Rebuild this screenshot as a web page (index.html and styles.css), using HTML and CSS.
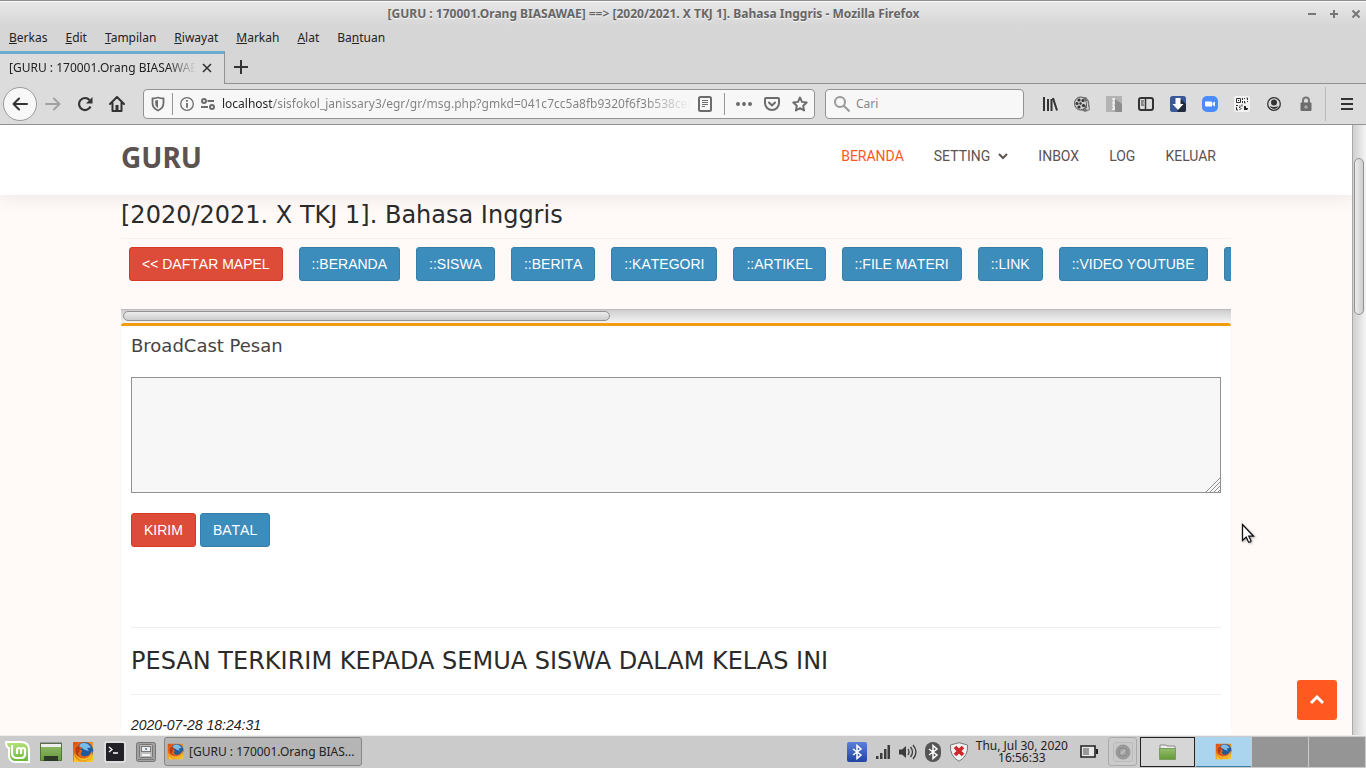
FILE: index.html
```html
<!DOCTYPE html>
<html lang="id">
<head>
<meta charset="utf-8">
<title>[GURU : 170001.Orang BIASAWAE] ==&gt; [2020/2021. X TKJ 1]. Bahasa Inggris</title>
<link rel="stylesheet" href="styles.css">
</head>
<body>
<svg class="defs" aria-hidden="true">
  <defs>
    <linearGradient id="fox" x1="0" y1="0" x2="1" y2="1"><stop offset="0" stop-color="#d94a18"/><stop offset=".5" stop-color="#f08a1c"/><stop offset="1" stop-color="#fbd02c"/></linearGradient>
    <linearGradient id="leaf" x1="0" y1="0" x2="0" y2="1"><stop offset="0" stop-color="#b5e27a"/><stop offset="1" stop-color="#6bb53a"/></linearGradient>
    <linearGradient id="green" x1="0" y1="0" x2="0" y2="1"><stop offset="0" stop-color="#94bd6c"/><stop offset="1" stop-color="#659a3a"/></linearGradient>
    <linearGradient id="blue" x1="0" y1="0" x2="0" y2="1"><stop offset="0" stop-color="#5b80da"/><stop offset="1" stop-color="#2144a4"/></linearGradient>
    <symbol id="firefox" viewBox="0 0 22 22">
      <rect x="1" y="1" width="20" height="20" rx="1" fill="url(#fox)"/>
      <path d="M2 13q1 6 7 8H2z" fill="#fbc52c"/>
      <circle cx="13" cy="9.500" r="8.300" fill="#1f5a9c"/>
      <path d="M8 3.500c4-3 9-1 11 3l-4 .5 2 3-4-1-3-2-3-1z" fill="#79bce8"/>
      <path d="M3 3c0 2 1 3 2 3 2-1 4 0 5 1L8 9c2 0 3 1 1 3-1 2 2 4 5 3 3 0 5-3 5.500-6C21 15 17 20 12 19.500 4 19 1 11 3 3z" fill="#e2661a"/>
      <path d="M20.500 10c0 6-4 9.500-9 9.500-4-.5-7-3-8-7 2 4 6 5.500 9.500 5 4-1 6-3.500 7.500-7.500z" fill="#f9c22b"/>
      <path d="M4 6c2-1 4 0 5 1L7 9c1 0 1 1 0 2-2 2 0 5 4 6-6-1-9-5-7-11z" fill="#b93a17"/>
    </symbol>
    <symbol id="bt" viewBox="0 0 16 16"><path d="m4 5 8 6-4 3.500V1.500L12 5l-8 6" fill="none" stroke="#fff" stroke-width="1.500"/></symbol>
  </defs>
</svg>

<header class="titlebar">
  <h1 class="titlebar-text">[GURU : 170001.Orang BIASAWAE] ==&gt; [2020/2021. X TKJ 1]. Bahasa Inggris - Mozilla Firefox</h1>
  <div class="window-controls">
    <button class="plain" aria-label="Minimize"><svg width="10" height="10"><path d="M1 5h8" stroke="#777" stroke-width="2"/></svg></button>
    <button class="plain" aria-label="Maximize"><svg width="10" height="10"><path d="M1 5h8M5 1v8" stroke="#777" stroke-width="2"/></svg></button>
    <button class="plain" aria-label="Close"><svg width="10" height="10"><path d="m1.500 1.500 7 7m0-7-7 7" stroke="#777" stroke-width="2"/></svg></button>
  </div>
</header>

<nav class="menubar">
  <button class="plain"><u>B</u>erkas</button><button class="plain"><u>E</u>dit</button><button class="plain"><u>T</u>ampilan</button><button class="plain"><u>R</u>iwayat</button><button class="plain"><u>M</u>arkah</button><button class="plain"><u>A</u>lat</button><button class="plain">Ba<u>n</u>tuan</button>
</nav>

<div class="tabs">
  <div class="tab">
    <span class="tab-title">[GURU : 170001.Orang BIASAWAE]</span>
    <button class="plain" aria-label="Tutup tab"><svg width="10" height="10"><path d="m1 1 8 8m0-8-8 8" stroke="#333" stroke-width="1.600"/></svg></button>
  </div>
  <div class="tab-rest"><button class="plain" aria-label="Tab baru"><svg width="14" height="14"><path d="M0 7h14M7 0v14" stroke="#333" stroke-width="2"/></svg></button></div>
</div>

<div class="toolbar">
  <div class="nav-buttons">
    <button class="plain back" aria-label="Kembali"><svg width="16" height="16" viewBox="0 0 16 16" fill="none" stroke="#333" stroke-width="2" stroke-linecap="round" stroke-linejoin="round"><path d="M15 8H1.500M7 2.500 1.500 8 7 13.500"/></svg></button>
    <button class="plain" aria-label="Maju"><svg width="16" height="16" viewBox="0 0 16 16" fill="none" stroke="#a0a0a0" stroke-width="2" stroke-linecap="round" stroke-linejoin="round"><path d="M1 8h13.500M9 2.500 14.500 8 9 13.500"/></svg></button>
    <button class="plain" aria-label="Muat ulang"><svg width="16" height="16" viewBox="0 0 16 16"><path d="M13.500 10.500A6 6 0 1 1 12.500 4" fill="none" stroke="#333" stroke-width="2.200"/><path d="M15.500 1v6.500H9z" fill="#333"/></svg></button>
    <button class="plain" aria-label="Beranda"><svg width="16" height="16" viewBox="0 0 16 16"><path d="m1 8 7-7 7 7M3.500 7v8h9V7" fill="none" stroke="#333" stroke-width="2" stroke-linejoin="round" stroke-linecap="round"/><path d="M6.500 9h3v6h-3z" fill="#333"/></svg></button>
  </div>
  <div class="urlbar">
    <svg width="14" height="16" viewBox="0 0 14 16"><path d="M7 1.500c2 .6 3.500.9 5.500 1V7c0 4-2 6-5.500 7.500C3.500 13 1.500 11 1.500 7V2.500c2-.1 3.500-.4 5.500-1z" fill="none" stroke="#6c6c6c" stroke-width="1.800"/><path d="M7 4v8C5 11 4.200 9.500 4.200 7V4.600z" fill="#6c6c6c"/></svg>
    <i class="bar-sep"></i>
    <svg width="14" height="14" viewBox="0 0 14 14"><circle cx="7" cy="7" r="6.300" fill="none" stroke="#6c6c6c" stroke-width="1.300"/><path d="M6.100 6h1.800v4.800H6.100zM6.100 3h1.800v1.800H6.100z" fill="#6c6c6c"/></svg>
    <svg width="14" height="14" viewBox="0 0 14 14" fill="none" stroke="#6c6c6c" stroke-width="2"><circle cx="3" cy="4" r="2"/><path d="M6.500 4H13M0 10h7"/><circle cx="11" cy="10" r="2"/></svg>
    <input class="url" aria-label="Alamat" value="localhost/sisfokol_janissary3/egr/gr/msg.php?gmkd=041c7cc5a8fb9320f6f3b538cedd">
    <svg width="14" height="16" viewBox="0 0 14 16"><rect x="1" y="1" width="12" height="14" rx="1.500" fill="none" stroke="#6c6c6c" stroke-width="2"/><path d="M4 4.500h6M4 6.500h6M4 8.500h6M4 10.500h3" stroke="#6c6c6c"/></svg>
    <i class="bar-sep wide-sep"></i>
    <svg width="16" height="16" fill="#6c6c6c"><circle cx="2" cy="8" r="2"/><circle cx="8" cy="8" r="2"/><circle cx="14" cy="8" r="2"/></svg>
    <svg class="pocket" width="16" height="16" viewBox="0 0 16 16" fill="none" stroke="#6c6c6c" stroke-width="2" stroke-linecap="round" stroke-linejoin="round"><path d="M2 2h12q1 0 1 1v4a7 7 0 0 1-14 0V3q0-1 1-1z"/><path d="m5 6.500 3 3 3-3"/></svg>
    <svg width="16" height="16" viewBox="0 0 16 16"><path d="m8 1.500 2 4.400 4.700.6-3.500 3.200.9 4.800L8 12.100l-4.100 2.400.9-4.800L1.300 6.500 6 5.900z" fill="none" stroke="#6c6c6c" stroke-width="1.900" stroke-linejoin="round"/></svg>
  </div>
  <div class="searchbar">
    <svg width="16" height="16" viewBox="0 0 16 16" fill="none" stroke="#999" stroke-width="2"><circle cx="6" cy="6" r="5"/><path d="m9.500 9.500 6 6"/></svg>
    <input aria-label="Cari" placeholder="Cari">
  </div>
  <div class="extensions">
    <svg width="16" height="16" viewBox="0 0 16 16" stroke="#333" stroke-width="2"><path d="M2 1v14M6 3v12M9.500 3v12M11 2l4 12.500"/></svg>
    <svg width="16" height="16" viewBox="0 0 16 16"><path d="m5 1 7 0 3 4 1 9-5 2-6-3z" fill="#777"/><ellipse cx="6.500" cy="7.500" rx="6" ry="6.500" fill="#ccc" stroke="#555"/><g fill="#333"><circle cx="6.500" cy="7.500" r="1.200"/><circle cx="5" cy="4" r="1.600"/><circle cx="9" cy="4.500" r="1.600"/><circle cx="3" cy="7.500" r="1.500"/><circle cx="5" cy="11" r="1.600"/><circle cx="9.500" cy="9.500" r="1.600"/></g><path d="m13 5 1 9m-2-1 3-1" stroke="#ddd"/></svg>
    <svg width="16" height="16" viewBox="0 0 16 16"><path d="M0 0h16v16H0z" fill="#b3b3b3"/><path d="m9 3 7 5v8H9z" fill="#8d8d8d"/><path d="M6 2h3v2l-1 1 1 1v2L8 9l1 2v3H6l1-3-1-1 1-2-1-1 1-2z" fill="#eee"/></svg>
    <svg width="16" height="16" viewBox="0 0 16 16"><rect x="1" y="2" width="14" height="12" rx="2" fill="none" stroke="#333" stroke-width="2"/><path d="M7.500 2v12" stroke="#333" stroke-width="1.500"/><path d="M3 5h3M3 7h2.500M3 9h3" stroke="#333"/></svg>
    <svg width="16" height="16" viewBox="0 0 16 16"><rect width="16" height="16" rx="2.500" fill="#3b5998"/><path d="m11 3 5 5v6q0 2-2 2H8l-1-2z" fill="#222a3b"/><path d="M5.500 2h5v6h3L8 14 2.500 8h3z" fill="#fff"/></svg>
    <svg width="16" height="16" viewBox="0 0 16 16"><rect width="16" height="16" rx="5" fill="#4a8cff"/><path d="M3 5.500h6q1 0 1 1v4H4q-1 0-1-1zM10.500 7 13 5.500v5L10.500 9z" fill="#fff"/></svg>
    <svg width="16" height="16" viewBox="0 0 16 16"><rect width="16" height="16" rx="2" fill="#f3f3f3"/><g fill="none" stroke="#333"><path d="M2.500 2.500h4v4h-4zM8.500 2v2m0 1v2m2-5v1m0 2v2h1m1-5h1v2m0 1v1M2 9.500h2m1 2h1v-2m2-1v2M2.500 11v3H4m1.500 0 2-2"/></g><path d="M10 10h2v2h2v1l-1 1h-3zM4 4h1v1H4z" fill="#222"/></svg>
    <svg width="16" height="16" viewBox="0 0 16 16"><circle cx="8" cy="8" r="6.300" fill="none" stroke="#333" stroke-width="1.300"/><circle cx="8" cy="6.500" r="3" fill="#333"/><path d="M3.500 10q4.500 2 9 0Q11 13 8 13t-4.500-3z" fill="#333"/></svg>
    <svg width="16" height="16" viewBox="0 0 16 16"><path d="M5 7V4.500a3 3 0 0 1 6 0V7" fill="none" stroke="#777" stroke-width="2"/><rect x="2.500" y="6.500" width="11" height="8.500" rx="1" fill="#6c6c6c"/><path d="M6 11h4M8 9v4" stroke="#bbb"/></svg>
  </div>
  <button class="plain app-menu" aria-label="Menu"><svg width="12" height="14"><path d="M0 2h12M0 7h12M0 12h12" stroke="#333" stroke-width="2"/></svg></button>
</div>

<div class="viewport">
  <main class="page">
    <header class="site-header">
      <div class="container header-row">
        <a class="brand" href="#">GURU</a>
        <nav class="site-nav">
          <a class="active" href="#">BERANDA</a>
          <a href="#">SETTING <svg width="10" height="8" viewBox="0 0 10 8"><path d="m1 2 4 4 4-4" fill="none" stroke="#5c5250" stroke-width="2"/></svg></a>
          <a href="#">INBOX</a><a href="#">LOG</a><a href="#">KELUAR</a>
        </nav>
      </div>
    </header>
    <div class="container">
      <h2 class="heading">[2020/2021. X TKJ 1]. Bahasa Inggris</h2>
      <div class="course-menu">
        <button class="btn danger">&lt;&lt; DAFTAR MAPEL</button>
        <button class="btn">::BERANDA</button>
        <button class="btn">::SISWA</button>
        <button class="btn">::BERITA</button>
        <button class="btn">::KATEGORI</button>
        <button class="btn">::ARTIKEL</button>
        <button class="btn">::FILE MATERI</button>
        <button class="btn">::LINK</button>
        <button class="btn">::VIDEO YOUTUBE</button>
        <button class="btn" aria-label="Menu lainnya"></button>
      </div>
      <div class="hscroll"><div class="hthumb"></div></div>
      <section class="box">
        <form class="message-form">
          <label class="box-title" for="pesan">BroadCast Pesan</label>
          <div class="message-wrap">
            <textarea id="pesan"></textarea>
            <svg class="grip" width="14" height="14"><path d="M0 14 14 0M4 14 14 4M8 14l6-6M12 14l2-2" stroke="#909090" stroke-width="1"/></svg>
          </div>
          <div class="actions"><button type="button" class="btn danger">KIRIM</button><button type="reset" class="btn">BATAL</button></div>
        </form>
        <h2 class="heading sent-heading">PESAN TERKIRIM KEPADA SEMUA SISWA DALAM KELAS INI</h2>
        <p class="sent-time"><em>2020-07-28 18:24:31</em></p>
      </section>
    </div>
    <a class="to-top" href="#" aria-label="Ke atas"><svg width="14" height="10" viewBox="0 0 14 10"><path d="m1 8 6-6 6 6" fill="none" stroke="#fff" stroke-width="3"/></svg></a>
    <svg class="cursor" width="14" height="21" viewBox="0 0 14 21"><path d="M1.500 1.500v16l3.700-3.400 2.400 5.100q2 .2 2.400-1.400l-2.200-4.600h4.700z" fill="#fff" stroke="#111" stroke-width="1.300"/></svg>
  </main>
  <div class="vscroll"><div class="vthumb"></div></div>
</div>

<footer class="taskbar">
  <div class="launchers">
    <button class="plain" aria-label="Menu Mint"><svg width="25" height="22" viewBox="0 0 25 22"><path d="M1 1h15q8 0 8 8v12H11q-7 0-7-7V7Q1 6 1 1z" fill="url(#leaf)" stroke="#fff" stroke-width="2"/><path d="M7 4v8q0 5 5 5h4q4 0 4-4V9q0-2-2-2t-2 2v4m0-4q0-2-2-2t-2 2v4" fill="none" stroke="#fff" stroke-width="2.200"/></svg></button>
    <button class="plain" aria-label="Tampilkan desktop"><svg width="22" height="20" viewBox="0 0 22 20"><path d="M.5 1.500h21v17H.5z" fill="url(#green)" stroke="#53733c"/><path d="M1 2h20v3H1z" fill="#eee"/><path d="M0 1h22" stroke="#666"/><path d="M4 14h14v5H4z" fill="#2d3b26"/></svg></button>
    <button class="plain" aria-label="Firefox"><svg width="22" height="22"><use href="#firefox"/></svg></button>
    <button class="plain" aria-label="Terminal"><svg width="22" height="22" viewBox="0 0 22 22"><rect x="1" y="1" width="20" height="20" rx="2" fill="#222128" stroke="#ddd" stroke-width="2"/><path d="m5 6 3 2.500L5 11M9 12h5" fill="none" stroke="#fff" stroke-width="1.300"/></svg></button>
    <button class="plain" aria-label="Berkas"><svg width="20" height="20" viewBox="0 0 20 20"><rect x=".5" y=".5" width="19" height="19" rx="2" fill="#a0a0a0" stroke="#777"/><rect x="3.500" y="2.500" width="13" height="13" rx="1" fill="#bbb" stroke="#777"/><rect x="5.500" y="4.500" width="9" height="5" fill="#eee" stroke="#777"/><path d="M6 12h8v2H6z" fill="#f4f4f4"/><path d="M2 17.500h16" stroke="#777"/><path d="M9 6h2v2H9z" fill="#7590ae"/></svg></button>
  </div>
  <button class="plain task"><svg width="17" height="17"><use href="#firefox"/></svg>[GURU : 170001.Orang BIAS...</button>
  <div class="tray">
    <svg width="20" height="22" viewBox="0 0 20 22"><rect y="1" width="20" height="20" rx="2" fill="url(#blue)"/><use href="#bt" x="2" y="3" width="16" height="16"/></svg>
    <svg width="16" height="16" viewBox="0 0 16 16"><path d="M1 12h2.500v3H1zM5 9h2.500v6H5zM9 5h2.500v10H9zM12.500 1H15v14h-2.500z" fill="#3c3c3c"/></svg>
    <svg width="18" height="16" viewBox="0 0 18 16"><path d="M0 5.500h3L7 2v12L3 10.500H0z" fill="#3c3c3c"/><path d="M9 5q2 3 0 6m2.500-8q4 5 0 10m2.500-12q6 7 0 14" fill="none" stroke="#3c3c3c" stroke-width="1.300"/></svg>
    <svg width="16" height="20" viewBox="0 0 16 20"><rect y="0" width="16" height="20" rx="8" fill="#555"/><use href="#bt" y="2" width="16" height="16"/></svg>
    <svg width="20" height="20" viewBox="0 0 20 20"><path d="M10 .7 18.500 3q1 11-8.500 16.300Q.5 14 1.500 3z" fill="#f1f1f1" stroke="#777"/><path d="m6 5 8 8m0-8-8 8" stroke="#d0242b" stroke-width="3.600"/></svg>
    <time class="clock">Thu, Jul 30, 2020<br>16:56:33</time>
    <svg class="battery" width="18" height="13" viewBox="0 0 18 13"><path d="M1 1h14v11H1z" fill="#e8e8e8" stroke="#222" stroke-width="1.600"/><path d="M3 3h6v7H3z" fill="#999"/><path d="M17 4v5" stroke="#222" stroke-width="2"/></svg>
    <button class="plain tray-box" aria-label="Rekam"><svg width="20" height="20" viewBox="0 0 20 20"><rect x=".5" y=".5" width="19" height="19" rx="2" fill="#c9c9c9" stroke="#bbb"/><circle cx="10" cy="10" r="7.500" fill="#999"/><circle cx="10" cy="10" r="4" fill="#a5a5a5" stroke="#8a8a8a"/><path d="m8 12 4-4" stroke="#bbb" stroke-width="2"/></svg></button>
  </div>
  <div class="workspaces">
    <button class="plain ws first" aria-label="Ruang kerja 1"><svg width="17" height="16" viewBox="0 0 17 16"><path d="M1 2V1h6l1 1h8v3H1z" fill="#eee" stroke="#888"/><path d="M.5 4.500h16v11H.5z" fill="url(#green)" stroke="#789d5d"/></svg></button>
    <button class="plain ws current" aria-label="Ruang kerja 2"><svg width="17" height="17"><use href="#firefox"/></svg></button>
    <button class="plain ws" aria-label="Ruang kerja 3"></button>
    <button class="plain ws" aria-label="Ruang kerja 4"></button>
  </div>
</footer>
</body>
</html>
```
FILE: styles.css
```css
* { box-sizing: border-box; }

body {
  margin: 0;
  height: 100vh;
  display: flex;
  flex-direction: column;
  overflow: hidden;
  background: #d6d6d6;
  color: #222;
  font: 12px/18px "Noto Sans", sans-serif;
}

svg { display: block; flex-shrink: 0; }
.defs { position: absolute; width: 0; height: 0; }
.plain { border: 0; padding: 0; background: none; color: inherit; font: inherit; }

/* Window chrome */
.titlebar {
  display: flex;
  align-items: center;
  height: 26px;
  padding: 0 5px 0 0;
  border-top: 1px solid #8d8d8d;
  box-shadow: inset 0 1px #fafafa;
  background: linear-gradient(#e8e8e8, #d6d6d6);
}
.titlebar-text { flex: 1; margin: 0; font-size: 12px; text-align: center; color: #666; text-shadow: 0 1px #f4f4f4; }
.window-controls { display: flex; gap: 12px; }

.menubar { display: flex; align-items: center; gap: 18px; height: 25px; padding: 0 9px 2px; }

.tabs { display: flex; height: 33px; }
.tab {
  display: flex;
  align-items: center;
  gap: 6px;
  width: 225px;
  padding: 0 12px 2px 9px;
  border-top: 3px solid #6aabcf;
  border-right: 1px solid #929292;
  background: #dcdcdc;
}
.tab-title {
  flex: 1;
  overflow: hidden;
  white-space: nowrap;
  -webkit-mask-image: linear-gradient(90deg, #000 85%, transparent);
  mask-image: linear-gradient(90deg, #000 85%, transparent);
}
.tab-rest { flex: 1; display: flex; align-items: center; padding-left: 9px; border-bottom: 1px solid #929292; }

.toolbar {
  display: flex;
  align-items: center;
  height: 41px;
  padding: 0 0 0 3px;
  border-bottom: 1px solid #929292;
  background: #dcdcdc;
}
.nav-buttons { display: flex; align-items: center; gap: 16px; margin-right: 18px; }
.back {
  display: flex;
  align-items: center;
  justify-content: center;
  width: 34px;
  height: 34px;
  margin-right: -8px;
  border: 1px solid #999;
  border-radius: 50%;
  background: #f8f8f8;
}
.urlbar, .searchbar {
  display: flex;
  align-items: center;
  height: 30px;
  border: 1px solid #929292;
  border-radius: 4px;
  background: #f7f7f7;
}
.urlbar { flex: 1; gap: 7px; padding: 0 6px 0 7px; }
.bar-sep { width: 1px; height: 22px; background: #999; }
.wide-sep { margin: 0 4px 0 5px; }
.pocket { margin: 0 5px; }
.url, .searchbar input { flex: 1; min-width: 0; border: 0; padding: 0; outline: 0; font: inherit; }
.url {
  color: transparent;
  background: linear-gradient(90deg, #222 51px, #808080 51px, #808080 90%, transparent) text;
  -webkit-background-clip: text;
}
.searchbar { width: 199px; margin: 0 18px 0 10px; padding: 0 8px; gap: 6px; }
.searchbar input { background: none; }
.searchbar input::placeholder { color: #888; opacity: 1; }
.extensions { display: flex; align-items: center; gap: 16px; }
.app-menu { height: 34px; margin-left: 11px; padding: 0 13px 0 15px; border-left: 1px solid #bbb; }

/* Web page */
.viewport { flex: 1; min-height: 0; display: flex; }
.page { position: relative; flex: 1; min-width: 0; overflow: hidden; background: #fffaf8; }
.container { width: 100%; max-width: 1110px; margin: 0 auto; }
.site-header { position: relative; background: #fff; box-shadow: 0 0 18px rgba(60, 40, 40, .13); }
.header-row { display: flex; align-items: center; justify-content: space-between; height: 70px; padding: 0 15px 6px 0; }
.brand { color: #5c5250; font: bold 28px/40px "Noto Sans", sans-serif; text-decoration: none; }
.site-nav { display: flex; gap: 30px; padding-bottom: 2px; }
.site-nav a { display: flex; align-items: center; gap: 8px; color: #5c5250; font: 14px/20px Roboto, sans-serif; text-decoration: none; }
.site-nav .active { color: #ff5821; }

.heading { margin: 0; color: #2b2b2b; font: 24px/28px "DejaVu Sans", sans-serif; }
.container > .heading { padding: 6px 0 9px; border-bottom: 1px solid #f5f1f0; }
.course-menu { display: flex; gap: 16px; padding: 8px 8px 28px; overflow: hidden; }
.btn {
  flex-shrink: 0;
  height: 34px;
  padding: 0 12px;
  border: 1px solid #367fa9;
  border-radius: 3px;
  background: #3c8dbc;
  color: #fff;
  font: 14px/20px "Liberation Sans", sans-serif;
  font-kerning: none;
  white-space: nowrap;
}
.danger { border-color: #d73925; background: #dd4b39; }

.hscroll { height: 14px; padding: 1px 2px; border-top: 1px solid #bbb; background: linear-gradient(#cfcfcf, #f4f4f4); }
.hthumb { width: 44%; height: 10px; border: 1px solid #929292; border-radius: 5px; background: linear-gradient(#ececec, #cdcdcd); }

.box { padding: 0 10px; border-top: 3px solid #f39c12; border-radius: 3px 3px 0 0; background: #fff; box-shadow: 0 1px 1px rgba(0, 0, 0, .1); }
.box-title { display: block; padding: 9px 0 20px; color: #444; font: 18px/22px "DejaVu Sans", sans-serif; }
.message-wrap { position: relative; }
textarea { display: block; width: 100%; height: 116px; border: 1px solid #929292; background: #f7f7f7; resize: none; outline: 0; }
.grip { position: absolute; right: 1px; bottom: 1px; }
.actions { display: flex; gap: 4px; padding: 20px 0 80px; }
.sent-heading { padding: 19px 0; border: solid #eee; border-width: 1px 0; }
.sent-time { margin: 0; padding: 20px 0; font: 14px/20px "Liberation Sans", sans-serif; }

.to-top {
  position: absolute;
  right: 15px;
  bottom: 15px;
  display: flex;
  align-items: center;
  justify-content: center;
  width: 40px;
  height: 40px;
  border-radius: 3px;
  background: #ff5821;
}
.cursor { position: absolute; left: 1241px; top: 398px; filter: drop-shadow(1px 1px 1px rgba(0, 0, 0, .3)); }

.vscroll { width: 14px; padding: 33px 2px 0 1px; border-left: 1px solid #aaa; background: linear-gradient(90deg, #cfcfcf, #f4f4f4); }
.vthumb { width: 10px; height: 157px; border: 1px solid #929292; border-radius: 5px; background: linear-gradient(90deg, #ececec, #cdcdcd); }

/* Desktop panel */
.taskbar { display: flex; align-items: center; height: 33px; padding: 0 1px 1px 5px; border-top: 1px solid #eee; background: #cbcbcb; }
.launchers { display: flex; align-items: center; gap: 10px; margin-right: 8px; }
.task {
  display: flex;
  align-items: center;
  gap: 5px;
  width: 198px;
  height: 29px;
  padding: 0 2px;
  border: 1px solid #858585;
  border-radius: 3px;
  background: #b5b5b5;
  white-space: nowrap;
}
.tray { flex: 1; display: flex; align-items: center; justify-content: flex-end; gap: 8px; margin-right: 3px; }
.clock { margin-left: -1px; font-size: 12px; line-height: 12px; text-align: center; }
.battery { margin: 0 2px 0 4px; }
.tray-box { display: flex; align-items: center; justify-content: center; width: 29px; height: 29px; border: 1px solid #aaa; border-radius: 3px; }
.workspaces { display: flex; gap: 1px; height: 30px; }
.ws { display: flex; align-items: center; justify-content: center; width: 56px; background: #959595; }
.ws.first { width: 55px; border: 1px solid #222; background: #d6d6d6; }
.ws.current { width: 55px; border-bottom: 1px solid #3e7d9f; background: #abd5ee; }
```
